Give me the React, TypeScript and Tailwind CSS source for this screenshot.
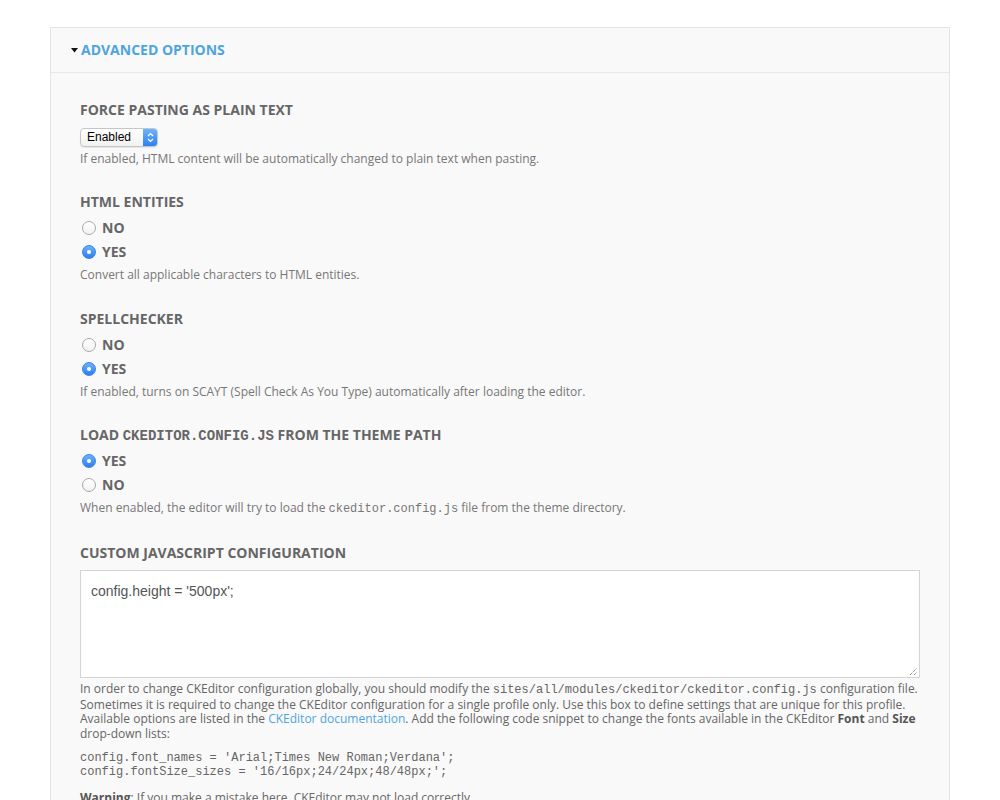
import React from "react";

const OS = "font-['Open_Sans',sans-serif]";

function Radio({ checked, label }: { checked: boolean; label: string }) {
  return (
    <div className="flex h-[24px] items-center">
      <div className="ml-[2px] flex h-[14px] w-[14px] items-center justify-center">
        {checked ? (
          <div className="flex h-[14px] w-[14px] items-center justify-center rounded-full border border-[#3a82e6] bg-gradient-to-b from-[#6cb1fb] to-[#2a7ef0]">
            <div className="h-[4px] w-[4px] rounded-full bg-white" />
          </div>
        ) : (
          <div className="h-[14px] w-[14px] rounded-full border border-[#a9a9a9] bg-gradient-to-b from-white to-[#f2f2f2]" />
        )}
      </div>
      <span className="ml-[6px] text-[14px] font-bold leading-[20px] text-[#666]">{label}</span>
    </div>
  );
}

function Label({ children }: { children: React.ReactNode }) {
  return <div className="h-[20px] text-[14px] font-bold uppercase leading-[20px] text-[#666]">{children}</div>;
}

function Desc({ children, className = "" }: { children: React.ReactNode; className?: string }) {
  return <div className={`text-[12px] leading-[18px] text-[#777] ${className}`}>{children}</div>;
}

export default function App() {
  return (
    <div className={`min-h-[800px] bg-white pt-[27px] ${OS}`}>
      <div className="ml-[50px] w-[900px] border border-b-0 border-[#e5e5e5] bg-[#f9f9f9]">
        <div className="flex h-[45px] items-center border-b border-[#e8e8e8] pb-[1px] pl-[20px]">
          <svg width="7" height="5" viewBox="0 0 7 5" className="mt-[2px]">
            <polygon points="0,0 7,0 3.5,4.5" fill="#111" />
          </svg>
          <span className="ml-[3px] text-[14px] font-bold uppercase text-[#4ea5dd]">Advanced options</span>
        </div>
        <div className="px-[29px] pt-[27px] pb-[20px]">
          {/* Section 1 */}
          <Label>Force pasting as plain text</Label>
          <div className="mt-[8px] flex h-[19px] w-[78px] overflow-hidden rounded-[4px] border border-[#c6c6c6] bg-gradient-to-b from-white to-[#f1f1f1] shadow-[0_1px_1px_rgba(0,0,0,0.08)]">
            <div className="flex-1 pl-[6px] font-['Liberation_Sans',Arial,sans-serif] text-[12px] leading-[17px] text-black">Enabled</div>
            <div className="flex w-[14px] items-center justify-center bg-gradient-to-b from-[#6fb3fb] to-[#2e7ff1]">
              <svg width="7" height="11" viewBox="0 0 7 11">
                <polyline points="1,4 3.5,1.5 6,4" fill="none" stroke="white" strokeWidth="1.2" />
                <polyline points="1,7 3.5,9.5 6,7" fill="none" stroke="white" strokeWidth="1.2" />
              </svg>
            </div>
          </div>
          <Desc className="mt-[3px]">If enabled, HTML content will be automatically changed to plain text when pasting.</Desc>

          {/* Section 2 */}
          <div className="mt-[24px]">
            <Label>HTML Entities</Label>
            <div className="mt-[4px]">
              <Radio checked={false} label="NO" />
              <Radio checked={true} label="YES" />
            </div>
            <Desc className="mt-[2px]">Convert all applicable characters to HTML entities.</Desc>
          </div>

          {/* Section 3 */}
          <div className="mt-[25px]">
            <Label>Spellchecker</Label>
            <div className="mt-[4px]">
              <Radio checked={false} label="NO" />
              <Radio checked={true} label="YES" />
            </div>
            <Desc className="mt-[2px]">If enabled, turns on SCAYT (Spell Check As You Type) automatically after loading the editor.</Desc>
          </div>

          {/* Section 4 */}
          <div className="mt-[24px]">
            <Label>
              Load{" "}
              <span className="font-['Liberation_Mono',monospace] text-[14px] font-bold">ckeditor.config.js</span>{" "}
              from the theme path
            </Label>
            <div className="mt-[4px]">
              <Radio checked={true} label="YES" />
              <Radio checked={false} label="NO" />
            </div>
            <Desc className="mt-[2px]">
              When enabled, the editor will try to load the{" "}
              <span className="font-['Liberation_Mono',monospace]">ckeditor.config.js</span> file from the theme directory.
            </Desc>
          </div>

          {/* Section 5 */}
          <div className="mt-[25px]">
            <Label>Custom JavaScript configuration</Label>
            <div className="relative mt-[7px] h-[108px] w-[840px] border border-[#d4d4d4] bg-white px-[10px] pt-[10px] font-['Liberation_Sans',Arial,sans-serif] text-[14px] leading-[20px] text-[#555]">
              config.height = '500px';
              <svg width="9" height="9" viewBox="0 0 9 9" className="absolute bottom-[1px] right-[1px]">
                <line x1="1" y1="8" x2="8" y2="1" stroke="#666" strokeWidth="1" strokeDasharray="1 1" />
                <line x1="5" y1="8" x2="8" y2="5" stroke="#666" strokeWidth="1" strokeDasharray="1 1" />
              </svg>
            </div>
            <div className="mt-[4px] text-[12px] leading-[14.6px] text-[#666]">
              <div className="whitespace-nowrap">
                In order to change CKEditor configuration globally, you should modify the{" "}
                <span className="font-['Liberation_Mono',monospace]">sites/all/modules/ckeditor/ckeditor.config.js</span> configuration file.
              </div>
              <div className="whitespace-nowrap">
                Sometimes it is required to change the CKEditor configuration for a single profile only. Use this box to define settings that are unique for this profile.
              </div>
              <div className="whitespace-nowrap">
                Available options are listed in the <span className="text-[#4ea5dd]">CKEditor documentation</span>. Add the following code snippet to change the fonts available in the CKEditor{" "}
                <b className="text-[#555]">Font</b> and <b className="text-[#555]">Size</b>
              </div>
              <div className="whitespace-nowrap">drop-down lists:</div>
              <div className="mt-[10px] whitespace-pre font-['Liberation_Mono',monospace] text-[12px] leading-[14px]">
                {"config.font_names = 'Arial;Times New Roman;Verdana';\nconfig.fontSize_sizes = '16/16px;24/24px;48/48px;';"}
              </div>
              <div className="mt-[12px] whitespace-nowrap">
                <b className="text-[#555]">Warning</b>: If you make a mistake here, CKEditor may not load correctly.
              </div>
            </div>
          </div>
        </div>
      </div>
    </div>
  );
}
